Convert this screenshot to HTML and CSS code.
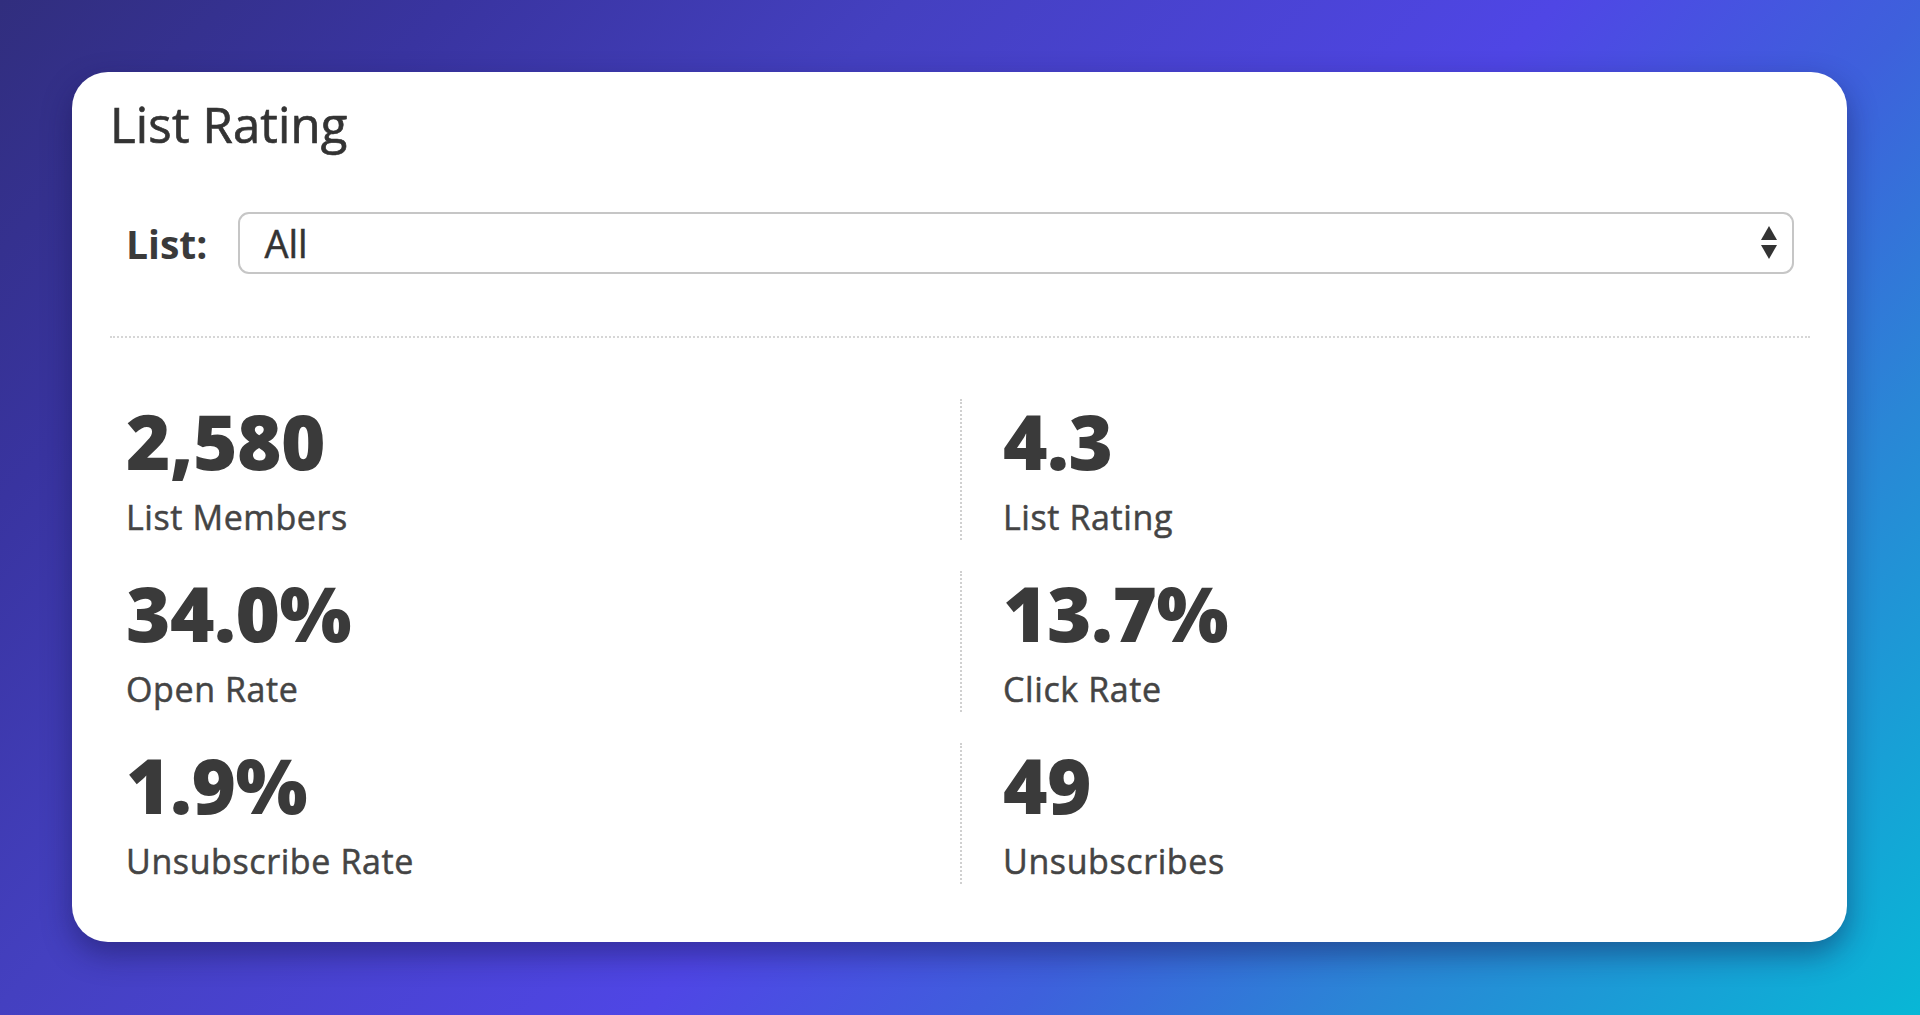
FILE: index.html
```html
<!doctype html>
<html lang="en">
 <head>
  <meta charset="UTF-8">
  <link rel="stylesheet" href="styles.css">
  <title>List Rating</title>
 </head>
 <body>
  <main class="stage">
   <section class="card">
    <h2 class="card-title">List Rating</h2>

    <div class="list-row">
     <label class="list-label" for="list">List:</label>
     <div class="select-wrap">
      <select id="list" class="list-select">
       <option>All</option>
      </select>
      <svg class="select-arrows" width="18" height="36" viewBox="0 0 18 36">
       <path d="M9 1 L17 15 L1 15 Z" fill="#333"/>
       <path d="M1 20 L17 20 L9 34 Z" fill="#333"/>
      </svg>
     </div>
    </div>

    <div class="stats">
     <div class="stat">
      <div class="stat-num">2,580</div>
      <div class="stat-label">List Members</div>
     </div>
     <div class="stat stat-right">
      <div class="stat-num">4.3</div>
      <div class="stat-label">List Rating</div>
     </div>
     <div class="stat">
      <div class="stat-num">34.0%</div>
      <div class="stat-label">Open Rate</div>
     </div>
     <div class="stat stat-right">
      <div class="stat-num">13.7%</div>
      <div class="stat-label">Click Rate</div>
     </div>
     <div class="stat">
      <div class="stat-num">1.9%</div>
      <div class="stat-label">Unsubscribe Rate</div>
     </div>
     <div class="stat stat-right">
      <div class="stat-num">49</div>
      <div class="stat-label">Unsubscribes</div>
     </div>
    </div>
   </section>
  </main>
 </body>
</html>
```

FILE: styles.css
```css
html,body{margin:0;padding:0;height:100%;}
body{
    font-family:"Open Sans","Noto Sans",sans-serif;
    color:#3d3d3d;
    background:linear-gradient(132deg,#312e7e 0%,#3934a0 16%,#4440c0 32%,#4f46e5 55%,#3e60dc 68%,#2a86d6 80%,#08b7d6 100%);
    overflow:hidden;
}
.stage{
    box-sizing:border-box;
    height:100%;
    padding:72px 73px 73px 72px;
}
.card{
    box-sizing:border-box;
    height:870px;
    background:#fff;
    border-radius:36px;
    box-shadow:0 12px 30px rgba(20,18,70,0.45);
    padding:28px 37px 0 38px;
}
.card-title{
    margin:0;
    font-size:49px;
    line-height:1;
    font-weight:400;
    letter-spacing:0.2px;
    color:#333;
    -webkit-text-stroke:0.7px #333;
    height:48px;
}

/* list selector */
.list-row{
    display:flex;
    align-items:center;
    gap:31px;
    margin-top:64px;
    padding:0 16px;
}
.list-label{
    font-size:39px;
    font-weight:700;
    color:#3a3a3a;
}
.select-wrap{
    position:relative;
    flex:1;
}
.list-select{
    -webkit-appearance:none;
    appearance:none;
    display:block;
    width:100%;
    height:62px;
    box-sizing:border-box;
    border:2px solid #c6c6c6;
    border-radius:11px;
    background:#fff;
    padding:0 24px;
    font:38px "Open Sans","Noto Sans",sans-serif;
    color:#333;
    -webkit-text-stroke:0.5px #333;
    outline:none;
}
.select-arrows{
    position:absolute;
    right:16px;
    top:13px;
    pointer-events:none;
}

/* stat grid */
.stats{
    display:grid;
    grid-template-columns:1fr 1fr;
    row-gap:31px;
    margin-top:62px;
    padding-top:61px;
    border-top:2px dotted #d6d6d6;
}
.stat{
    height:141px;
    padding-left:16px;
}
.stat-right{
    border-left:2px dotted #d0d0d0;
    padding-left:41px;
}
.stat-num{
    font-size:76px;
    line-height:1;
    font-weight:800;
    color:#3a3a3a;
    padding-top:4px;
    letter-spacing:-0.5px;
}
.stat-label{
    font-size:34px;
    line-height:1.2;
    margin-top:18px;
    color:#444;
    -webkit-text-stroke:0.5px #444;
    letter-spacing:0.6px;
}
```
